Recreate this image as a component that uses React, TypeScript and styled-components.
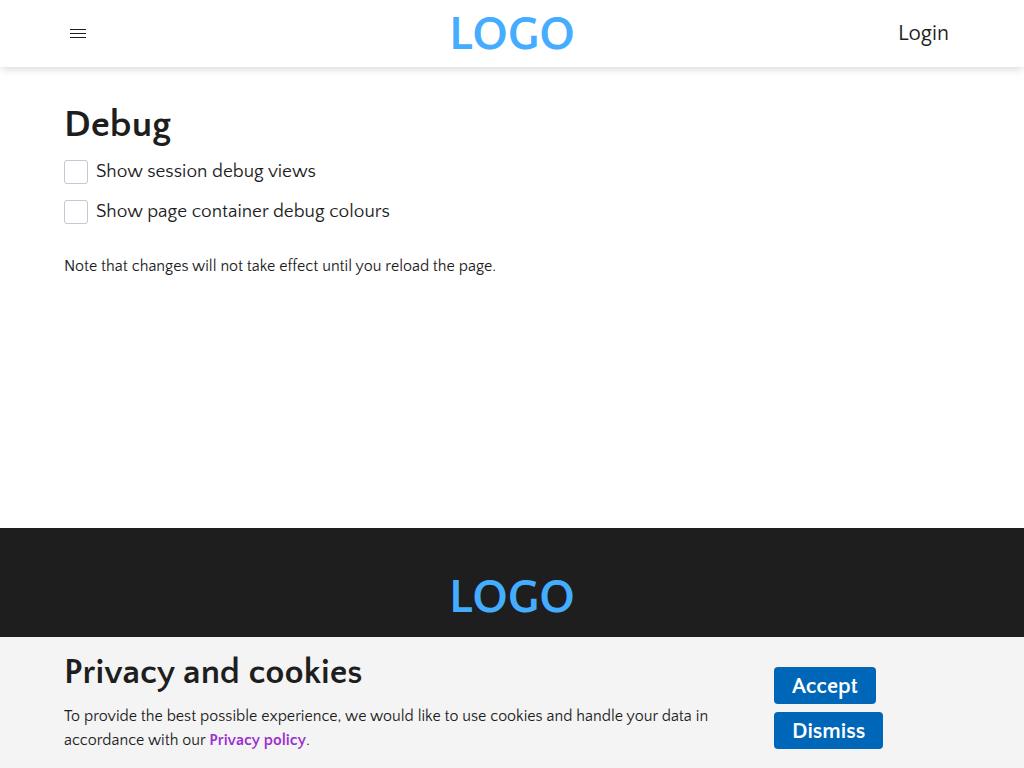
import React from "react";
import styled, { createGlobalStyle } from "styled-components";

const GlobalStyle = createGlobalStyle`
  *, *::before, *::after { box-sizing: border-box; }
  body {
    margin: 0;
    background: #fff;
    color: #1e1e1e;
    font: 400 16px/24px "Quattrocento Sans", Lato, "Open Sans", sans-serif;
  }
`;

const Page = styled.div`
  display: flex;
  flex-direction: column;
  min-height: 100vh;
`;

const Header = styled.header`
  display: grid;
  grid-template-columns: 1fr auto 1fr;
  align-items: center;
  height: 67px;
  padding: 0 64px;
  background: #fff;
  box-shadow: 0 4px 8px -2px rgba(0, 0, 0, 0.16);
`;

const MenuButton = styled.button`
  display: flex;
  justify-self: start;
  padding: 6px;
  border: 0;
  background: none;
  color: inherit;
  cursor: pointer;
`;

const LoginLink = styled.a`
  justify-self: end;
  padding: 0 11px;
  color: inherit;
  font-size: 22px;
  line-height: 32px;
  text-decoration: none;
`;

const Logo = styled.a`
  padding-top: 3px;
  color: #44adff;
  font-size: 48px;
  font-weight: 700;
  line-height: 64px;
  text-decoration: none;
`;

const Main = styled.main`
  flex: 1;
  padding: 32px 64px;
`;

const Title = styled.h1`
  margin: 0 0 9px;
  font-size: 38px;
  font-weight: 700;
  line-height: 52px;
`;

const Option = styled.label`
  display: flex;
  align-items: center;
  gap: 8px;
  width: fit-content;
  margin-bottom: 16px;
  font-size: 19px;
  line-height: 24px;
`;

const Checkbox = styled.input`
  appearance: none;
  width: 24px;
  height: 24px;
  margin: 0;
  border: 1px solid #c8c6d4;
  border-radius: 3px;
  background: #fff;

  &:checked { background: #0067b8; }
`;

const Text = styled.p`
  margin: 0;
`;

const Note = styled(Text)`
  margin-top: 30px;
`;

const Footer = styled.footer`
  display: flex;
  justify-content: center;
  min-height: 240px;
  padding: 35px 64px;
  background: #1e1e1e;
`;

const Banner = styled.section`
  position: fixed;
  right: 0;
  bottom: 0;
  left: 0;
  display: grid;
  grid-template-columns: 1fr 186px;
  gap: 24px;
  align-items: center;
  padding: 12px 64px 16px;
  background: #f4f4f4;
`;

const BannerTitle = styled.h2`
  margin: 0 0 8px;
  font-size: 35px;
  font-weight: 700;
  line-height: 47px;
`;

const PolicyLink = styled.a`
  color: #9b30d0;
  font-weight: 700;
  text-decoration: none;
`;

const Actions = styled.div`
  display: flex;
  flex-direction: column;
  align-items: flex-start;
  gap: 8px;
  padding-top: 14px;
`;

const Button = styled.button`
  height: 37px;
  padding: 3px 18px 0;
  border: 0;
  border-radius: 4px;
  background: #0067b8;
  color: #fff;
  font: inherit;
  font-size: 22px;
  font-weight: 700;
  cursor: pointer;
`;

const options = ["Show session debug views", "Show page container debug colours"];

export default function App() {
  return (
    <Page>
      <GlobalStyle />
      <Header>
        <MenuButton type="button" aria-label="Menu">
          <svg width="16" height="16" viewBox="0 0 16 16" shapeRendering="crispEdges" aria-hidden="true">
            <path d="M0 3.5h16M0 7.5h16M0 11.5h16" stroke="currentColor" />
          </svg>
        </MenuButton>
        <Logo href="#">LOGO</Logo>
        <LoginLink href="#">Login</LoginLink>
      </Header>
      <Main>
        <Title>Debug</Title>
        {options.map((label) => (
          <Option key={label}>
            <Checkbox type="checkbox" />
            {label}
          </Option>
        ))}
        <Note>Note that changes will not take effect until you reload the page.</Note>
      </Main>
      <Footer>
        <Logo href="#">LOGO</Logo>
      </Footer>
      <Banner>
        <div>
          <BannerTitle>Privacy and cookies</BannerTitle>
          <Text>
            To provide the best possible experience, we would like to use cookies and handle your data in accordance
            with our <PolicyLink href="#">Privacy policy</PolicyLink>.
          </Text>
        </div>
        <Actions>
          <Button type="button">Accept</Button>
          <Button type="button">Dismiss</Button>
        </Actions>
      </Banner>
    </Page>
  );
}
